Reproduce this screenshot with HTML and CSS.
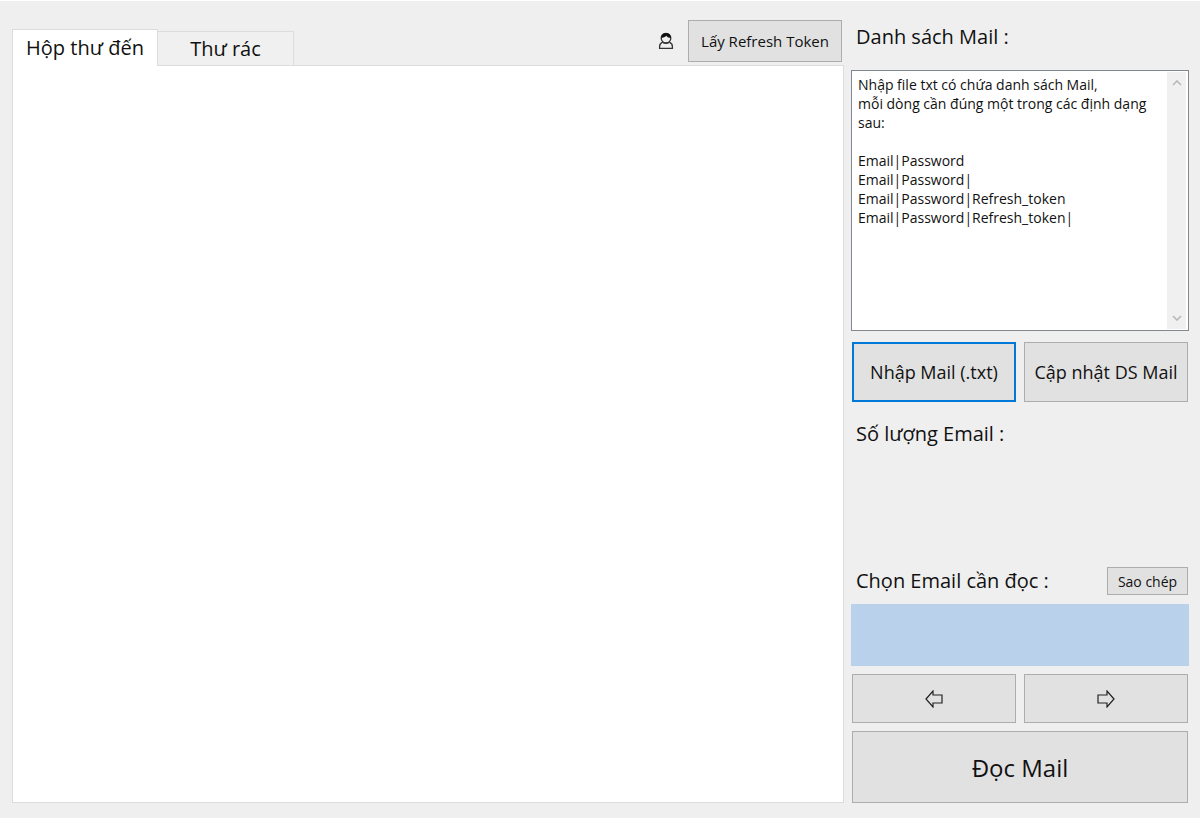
FILE: index.html
```html
<!DOCTYPE html>
<html lang="vi">
<head>
<meta charset="utf-8">
<meta name="viewport" content="width=device-width, initial-scale=1">
<title>Đọc Mail</title>
<link rel="stylesheet" href="styles.css">
</head>
<body>
<main class="window">
  <section class="mailbox">
    <header class="mailbox-header">
      <div class="tabs" role="tablist">
        <button class="tab tab-active" type="button" role="tab" aria-selected="true" aria-controls="mail-view">Hộp thư đến</button>
        <button class="tab" type="button" role="tab" aria-selected="false">Thư rác</button>
      </div>
      <div class="account">
        <svg class="user-icon" viewBox="0 0 16 18" aria-hidden="true">
          <path d="M4.6 10.2C2.8 11 1.6 12.4 1.6 14.6V16.3H14.4V14.6C14.4 12.4 13.2 11 11.4 10.2" />
          <path d="M4.6 10.2C5.5 11.6 10.5 11.6 11.4 10.2" />
          <circle cx="8" cy="6.2" r="4.8" />
          <path class="hair" d="M3.2 5.8C3.2 2.8 5.2 1 8 1C10.8 1 12.8 2.8 12.8 6C11 6 9.4 5.2 8.2 3.8C7 5.2 5.2 5.8 3.2 5.8Z" />
        </svg>
        <button class="button button-token" type="button">Lấy Refresh Token</button>
      </div>
    </header>
    <div class="mail-view" id="mail-view" role="tabpanel"></div>
  </section>

  <aside class="sidebar">
    <label class="title list-title" for="mail-list">Danh sách Mail :</label>
    <div class="list-box">
      <textarea class="list-input" id="mail-list" spellcheck="false">Nhập file txt có chứa danh sách Mail,
mỗi dòng cần đúng một trong các định dạng sau:

Email|Password
Email|Password|
Email|Password|Refresh_token
Email|Password|Refresh_token|</textarea>
      <div class="scrollbar" aria-hidden="true">
        <svg class="chevron" viewBox="0 0 10 6"><path d="M1 5L5 1L9 5" /></svg>
        <svg class="chevron" viewBox="0 0 10 6"><path d="M1 1L5 5L9 1" /></svg>
      </div>
    </div>
    <div class="pair">
      <button class="button button-import button-default" type="button">Nhập Mail (.txt)</button>
      <button class="button button-import" type="button">Cập nhật DS Mail</button>
    </div>
    <h2 class="title count-title">Số lượng Email :</h2>
    <div class="select-row">
      <h2 class="title">Chọn Email cần đọc :</h2>
      <button class="button button-copy" type="button">Sao chép</button>
    </div>
    <div class="current-mail"></div>
    <div class="pair">
      <button class="button button-step" type="button" aria-label="Email trước">
        <svg class="arrow" viewBox="0 0 18 18" aria-hidden="true"><path d="M1 9L8 1V5H17V13H8V17Z" /></svg>
      </button>
      <button class="button button-step" type="button" aria-label="Email sau">
        <svg class="arrow" viewBox="0 0 18 18" aria-hidden="true"><path d="M17 9L10 1V5H1V13H10V17Z" /></svg>
      </button>
    </div>
    <button class="button button-read" type="button">Đọc Mail</button>
  </aside>
</main>
</body>
</html>
```
FILE: styles.css
```css
* {
  box-sizing: border-box;
}

body {
  margin: 0;
  color: #111;
  background: #efefef;
  font-family: "Open Sans", "Noto Sans", sans-serif;
}

button,
textarea {
  color: inherit;
  font-family: inherit;
}

.window {
  display: grid;
  grid-template-columns: minmax(0, 1fr) 338px;
  gap: 7px;
  min-height: 100vh;
  padding: 0 11px 15px 12px;
  border-top: 1px solid #fff;
}

.mailbox {
  display: flex;
  flex-direction: column;
}

.mailbox-header {
  display: flex;
  justify-content: space-between;
  height: 64px;
}

.tabs {
  display: flex;
  align-items: flex-end;
}

.tab {
  width: 136px;
  height: 34px;
  padding: 0;
  border: 1px solid #dcdcdc;
  border-bottom: 0;
  border-left: 0;
  background: #f0f0f0;
  font-size: 20px;
  line-height: 34px;
}

/* The selected tab covers the top border of the mail view. */
.tab-active {
  position: relative;
  z-index: 1;
  width: 146px;
  height: 37px;
  margin-bottom: -1px;
  border-left: 1px solid #dcdcdc;
  background: #fff;
}

.account {
  display: flex;
  align-items: center;
  gap: 14px;
  padding: 19px 2px 3px 0;
}

.user-icon {
  width: 16px;
  height: 18px;
  fill: none;
  stroke: #333;
  stroke-width: 1.3;
}

.user-icon .hair {
  fill: #111;
  stroke: none;
}

.button {
  padding: 0;
  border: 1px solid #adadad;
  background: #e1e1e1;
}

.button-token {
  width: 154px;
  height: 42px;
  font-size: 15px;
}

.mail-view {
  flex: 1;
  border: 1px solid #dcdcdc;
  background: #fff;
}

.sidebar {
  display: flex;
  flex-direction: column;
}

.title {
  margin: 0;
  padding-left: 5px;
  font-size: 20px;
  font-weight: 400;
  line-height: 28px;
}

.list-title {
  padding-top: 22px;
  padding-bottom: 19px;
}

.list-box {
  display: flex;
  height: 261px;
  margin-bottom: 11px;
  padding: 1px 2px 1px 1px;
  border: 1px solid #828790;
  background: #fff;
}

.list-input {
  flex: 1;
  min-width: 0;
  padding: 3px 5px;
  border: 0;
  outline: 0;
  background: transparent;
  font-size: 14px;
  line-height: 19px;
  overflow: hidden;
  resize: none;
}

.scrollbar {
  display: flex;
  flex-direction: column;
  align-items: center;
  justify-content: space-between;
  width: 19px;
  padding: 8px 0;
  background: #f0f0f0;
}

.chevron {
  width: 10px;
  height: 6px;
  fill: none;
  stroke: #b8b8b8;
  stroke-width: 1.6;
}

.pair {
  display: grid;
  grid-template-columns: 1fr 1fr;
  gap: 8px;
  padding: 0 1px;
}

.button-import {
  height: 60px;
  font-size: 18px;
}

.button-default {
  border: 2px solid #0078d7;
}

.count-title {
  margin: 18px 0 auto;
}

.select-row {
  display: flex;
  align-items: center;
  justify-content: space-between;
  padding-right: 1px;
}

.button-copy {
  width: 81px;
  height: 28px;
  font-size: 14px;
}

.current-mail {
  height: 62px;
  margin: 9px 0 8px;
  background: #b9d1ea;
}

.button-step {
  display: flex;
  align-items: center;
  justify-content: center;
  height: 49px;
}

.arrow {
  width: 18px;
  height: 18px;
  fill: none;
  stroke: #222;
  stroke-width: 1.2;
}

.button-read {
  height: 72px;
  margin: 8px 1px 0;
  font-size: 24px;
}
```
